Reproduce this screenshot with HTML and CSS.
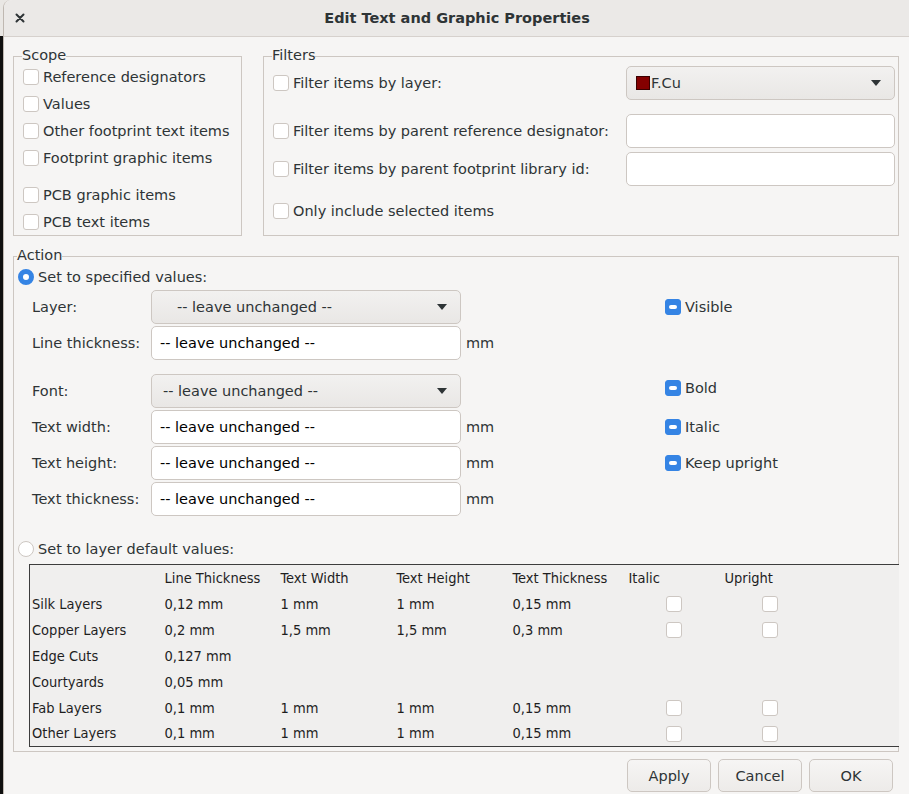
FILE: index.html
```html
<!DOCTYPE html>
<html lang="en">
<head>
  <meta charset="UTF-8" />
  <title>Edit Text and Graphic Properties</title>
  <link rel="stylesheet" href="styles.css">
</head>
<body>
  <div class="dialog">
    <!-- TITLE BAR -->
    <header class="titlebar">
      <span class="close-btn">
        <svg width="10" height="10" viewBox="0 0 10 10"><path d="M1.5 1.5 L8.5 8.5 M8.5 1.5 L1.5 8.5" stroke="#2e3436" stroke-width="2" stroke-linecap="round"/></svg>
      </span>
      <h1>Edit Text and Graphic Properties</h1>
    </header>

    <main class="body">
      <div class="top-groups">
        <!-- SCOPE -->
        <fieldset class="group scope">
          <legend>Scope</legend>
          <div class="check-list">
            <label class="check"><span class="box"></span>Reference designators</label>
            <label class="check"><span class="box"></span>Values</label>
            <label class="check"><span class="box"></span>Other footprint text items</label>
            <label class="check"><span class="box"></span>Footprint graphic items</label>
            <label class="check extra-gap"><span class="box"></span>PCB graphic items</label>
            <label class="check"><span class="box"></span>PCB text items</label>
          </div>
        </fieldset>

        <!-- FILTERS -->
        <fieldset class="group filters">
          <legend>Filters</legend>
          <div class="filter-row">
            <label class="check"><span class="box"></span>Filter items by layer:</label>
            <div class="combo layer-filter"><span class="swatch"></span>F.Cu<span class="arrow"></span></div>
          </div>
          <div class="filter-row row-ref">
            <label class="check"><span class="box"></span>Filter items by parent reference designator:</label>
            <div class="entry"></div>
          </div>
          <div class="filter-row row-lib">
            <label class="check"><span class="box"></span>Filter items by parent footprint library id:</label>
            <div class="entry"></div>
          </div>
          <div class="filter-row row-sel">
            <label class="check"><span class="box"></span>Only include selected items</label>
          </div>
        </fieldset>
      </div>

      <!-- ACTION -->
      <fieldset class="group action">
        <legend>Action</legend>
        <label class="radio checked"><span class="dot"></span>Set to specified values:</label>

        <div class="props">
          <span class="prop-label">Layer:</span>
          <div class="combo wide-pad">-- leave unchanged --<span class="arrow"></span></div>
          <span></span>
          <label class="check"><span class="box mixed"></span>Visible</label>

          <span class="prop-label">Line thickness:</span>
          <div class="entry">-- leave unchanged --</div>
          <span class="unit">mm</span>
          <span></span>

          <div class="props-spacer"></div>

          <span class="prop-label">Font:</span>
          <div class="combo">-- leave unchanged --<span class="arrow"></span></div>
          <span></span>
          <label class="check bold-check"><span class="box mixed"></span>Bold</label>

          <span class="prop-label">Text width:</span>
          <div class="entry">-- leave unchanged --</div>
          <span class="unit">mm</span>
          <label class="check"><span class="box mixed"></span>Italic</label>

          <span class="prop-label">Text height:</span>
          <div class="entry">-- leave unchanged --</div>
          <span class="unit">mm</span>
          <label class="check"><span class="box mixed"></span>Keep upright</label>

          <span class="prop-label">Text thickness:</span>
          <div class="entry">-- leave unchanged --</div>
          <span class="unit">mm</span>
          <span></span>
        </div>

        <label class="radio second"><span class="dot"></span>Set to layer default values:</label>

        <table class="defaults">
          <colgroup>
            <col style="width: 132px">
            <col style="width: 116px">
            <col style="width: 116px">
            <col style="width: 116px">
            <col style="width: 116px">
            <col style="width: 96px">
            <col style="width: 96px">
            <col>
          </colgroup>
          <tr>
            <td></td><td>Line Thickness</td><td>Text Width</td><td>Text Height</td><td>Text Thickness</td><td>Italic</td><td>Upright</td><td></td>
          </tr>
          <tr>
            <td>Silk Layers</td><td>0,12 mm</td><td>1 mm</td><td>1 mm</td><td>0,15 mm</td>
            <td class="cb"><span class="box"></span></td><td class="cb"><span class="box"></span></td><td></td>
          </tr>
          <tr>
            <td>Copper Layers</td><td>0,2 mm</td><td>1,5 mm</td><td>1,5 mm</td><td>0,3 mm</td>
            <td class="cb"><span class="box"></span></td><td class="cb"><span class="box"></span></td><td></td>
          </tr>
          <tr>
            <td>Edge Cuts</td><td>0,127 mm</td><td></td><td></td><td></td><td></td><td></td><td></td>
          </tr>
          <tr>
            <td>Courtyards</td><td>0,05 mm</td><td></td><td></td><td></td><td></td><td></td><td></td>
          </tr>
          <tr>
            <td>Fab Layers</td><td>0,1 mm</td><td>1 mm</td><td>1 mm</td><td>0,15 mm</td>
            <td class="cb"><span class="box"></span></td><td class="cb"><span class="box"></span></td><td></td>
          </tr>
          <tr>
            <td>Other Layers</td><td>0,1 mm</td><td>1 mm</td><td>1 mm</td><td>0,15 mm</td>
            <td class="cb"><span class="box"></span></td><td class="cb"><span class="box"></span></td><td></td>
          </tr>
        </table>
      </fieldset>

      <div class="buttons">
        <button class="btn">Apply</button>
        <button class="btn">Cancel</button>
        <button class="btn">OK</button>
      </div>
    </main>
  </div>
</body>
</html>
```

FILE: styles.css
```css
* { margin: 0; padding: 0; box-sizing: border-box; }

html, body {
  width: 909px;
  height: 794px;
  overflow: hidden;
  font-family: 'DejaVu Sans', sans-serif;
  font-size: 14.5px;
  color: #2e3436;
}

body {
  /* editor canvas peeking out behind the dialog */
  background: linear-gradient(#e9e7e4 0 36px, #101010 36px);
}

.dialog {
  height: 100%;
  margin-left: 3px;
  display: flex;
  flex-direction: column;
  background: #f6f5f4;
  border-left: 1px solid #bfb8b1;
  border-top-left-radius: 8px;
}

/* title bar */
.titlebar {
  height: 37px;
  flex: none;
  display: flex;
  align-items: center;
  justify-content: center;
  position: relative;
  background: #ebe9e7;
  border-bottom: 1px solid #d6d1cd;
  border-top-left-radius: 8px;
}

.titlebar h1 {
  font-size: 14.5px;
  font-weight: bold;
  color: #2e3436;
  margin-left: 1px;
}

.close-btn {
  position: absolute;
  left: 11px;
  top: 13px;
  width: 10px;
  height: 10px;
  display: flex;
}

/* body */
.body {
  flex: 1;
  padding: 10px 10px 0 9px;
  display: flex;
  flex-direction: column;
}

.top-groups {
  display: flex;
  gap: 21px;
}

.group {
  border: 1px solid #cdc7c2;
  min-width: 0;
}

.group legend {
  line-height: 17px;
  padding: 0 0 2px;
  margin-left: -1px;
  color: #2e3436;
}

/* checkboxes */
.check {
  display: flex;
  align-items: center;
  gap: 4px;
  white-space: nowrap;
}

.box {
  display: inline-block;
  width: 16px;
  height: 16px;
  flex: none;
  background: #fff;
  border: 1px solid #cdc7c2;
  border-radius: 3px;
}

.box.mixed {
  position: relative;
  background: #3584e4;
  border-color: #3584e4;
}

.box.mixed::after {
  content: "";
  position: absolute;
  left: 3px;
  top: 5px;
  width: 8px;
  height: 4px;
  border-radius: 2px;
  background: #fff;
}

/* scope */
.scope {
  width: 229px;
  flex: none;
  padding: 0 0 2px 9px;
}

.check-list {
  display: flex;
  flex-direction: column;
  gap: 5px;
}

.check-list .check {
  height: 22px;
}

.check-list .extra-gap {
  margin-top: 10px;
}

/* filters */
.filters {
  flex: 1;
  padding: 0 3px 0 9px;
}

.filter-row {
  height: 34px;
  display: flex;
  align-items: center;
  justify-content: space-between;
}

.filter-row.row-ref { margin-top: 14px; }
.filter-row.row-lib { margin-top: 4px; }
.filter-row.row-sel { margin-top: 8px; }

.filter-row .combo,
.filter-row .entry {
  width: 269px;
  height: 34px;
}

/* combos and entries */
.combo {
  display: flex;
  align-items: center;
  position: relative;
  padding-left: 11px;
  background: linear-gradient(#f2f1f0, #e9e7e5);
  border: 1px solid #cdc7c2;
  border-radius: 5px;
  color: #2e3436;
}

.combo.wide-pad {
  padding-left: 25px;
}

.combo .arrow {
  position: absolute;
  right: 13px;
  top: 50%;
  margin-top: -3px;
  border-left: 5.5px solid transparent;
  border-right: 5.5px solid transparent;
  border-top: 6px solid #2e3436;
}

.layer-filter {
  padding-left: 9px;
}

.swatch {
  width: 14px;
  height: 14px;
  margin-right: 1px;
  background: #840000;
  border: 1px solid #3a0000;
}

.entry {
  display: flex;
  align-items: center;
  padding-left: 8px;
  background: #fff;
  border: 1px solid #cdc7c2;
  border-radius: 5px;
  color: #000;
}

/* action */
.action {
  margin-top: 11px;
  padding: 0 0 4px 4px;
}

.radio {
  height: 22px;
  display: flex;
  align-items: center;
  gap: 4px;
}

.radio .dot {
  width: 16px;
  height: 16px;
  border-radius: 50%;
  background: #fff;
  border: 1px solid #cdc7c2;
}

.radio.checked .dot {
  background: #fff;
  border: 5px solid #3584e4;
}

.radio.second {
  margin-top: 23px;
}

.props {
  display: grid;
  grid-template-columns: 119px 310px 204px auto;
  grid-template-rows: 33px 33px 9px 33px 33px 33px 33px;
  row-gap: 3px;
  margin-top: 2px;
  padding-left: 14px;
  align-items: center;
}

.props .combo,
.props .entry {
  height: 34px;
}

.props-spacer {
  grid-column: 1 / -1;
}

.unit {
  padding-left: 5px;
}

.bold-check {
  margin-top: -6px;
}

/* defaults grid */
.defaults {
  margin: 4px 0 0 11px;
  width: 870px;
  table-layout: fixed;
  border-collapse: collapse;
  background: #f0efee;
  border-top: 1px solid #3d3d3d;
  border-bottom: 1px solid #3d3d3d;
  border-left: 1px solid #3d3d3d;
  font-family: 'DejaVu Sans Condensed', 'DejaVu Sans', sans-serif;
  font-stretch: condensed;
  font-size: 14.5px;
  color: #1e1e1e;
}

.defaults td {
  height: 26px;
  padding: 0 3px;
  white-space: nowrap;
  vertical-align: middle;
}

.defaults td:first-child {
  padding-left: 2px;
}

.defaults td.cb {
  text-align: center;
}

.defaults td.cb .box {
  vertical-align: middle;
}

/* buttons */
.buttons {
  display: flex;
  justify-content: flex-end;
  gap: 7px;
  margin-top: 7px;
  padding-right: 6px;
}

.btn {
  width: 84px;
  height: 33px;
  font-family: 'DejaVu Sans', sans-serif;
  font-size: 14.5px;
  color: #2e3436;
  background: linear-gradient(#f6f5f4, #edebe9);
  border: 1px solid #cdc7c2;
  border-radius: 5px;
}
```
